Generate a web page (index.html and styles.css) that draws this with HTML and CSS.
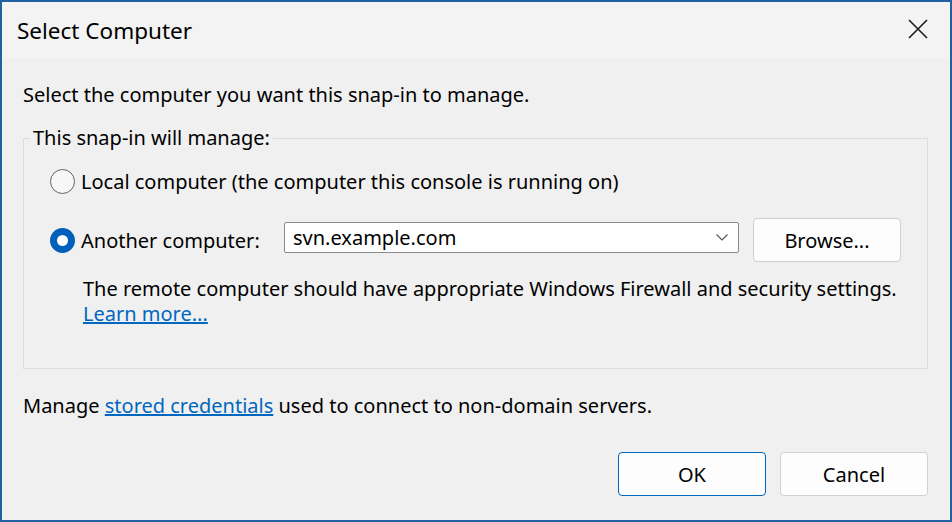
FILE: index.html
```html
<!DOCTYPE html>
<html lang="en">
<head>
    <meta charset="UTF-8">
    <title>Select Computer</title>
    <link rel="stylesheet" href="styles.css">
</head>
<body>
    <div class="window">
        <div class="titlebar">
            <span class="title">Select Computer</span>
            <button class="close" aria-label="Close">
                <svg width="20" height="20" viewBox="0 0 20 20">
                    <path d="M1 1 L19 19 M19 1 L1 19" stroke="#1a1a1a" stroke-width="1.6" fill="none"/>
                </svg>
            </button>
        </div>

        <div class="content">
            <p class="intro">Select the computer you want this snap-in to manage.</p>

            <fieldset class="group">
                <legend>This snap-in will manage:</legend>

                <div class="group-body">
                    <label class="row row-local">
                        <span class="radio"></span>
                        <span>Local computer (the computer this console is running on)</span>
                    </label>

                    <div class="row row-remote">
                        <label class="radio-label">
                            <span class="radio checked"></span>
                            <span>Another computer:</span>
                        </label>
                        <div class="combo">
                            <span>svn.example.com</span>
                            <svg width="12" height="7" viewBox="0 0 12 7">
                                <path d="M0.5 0.5 L6 6 L11.5 0.5" stroke="#555" stroke-width="1.1" fill="none"/>
                            </svg>
                        </div>
                        <button class="btn browse">Browse...</button>
                    </div>

                    <p class="note">
                        The remote computer should have appropriate Windows Firewall and security settings.<br>
                        <a href="#">Learn more...</a>
                    </p>
                </div>
            </fieldset>

            <p class="creds">Manage <a href="#">stored credentials</a> used to connect to non-domain servers.</p>

            <div class="actions">
                <button class="btn default">OK</button>
                <button class="btn">Cancel</button>
            </div>
        </div>
    </div>
</body>
</html>
```

FILE: styles.css
```css
body {
    margin: 0;
    font-family: "Noto Sans", "Open Sans", sans-serif;
    font-size: 20px;
    color: #000;
}

.window {
    width: 952px;
    height: 522px;
    box-sizing: border-box;
    border: 2px solid #2161a3;
    background-color: #f0f0f0;
}

.titlebar {
    height: 56px;
    display: flex;
    align-items: center;
    justify-content: space-between;
    padding: 0 22px 0 15px;
    background-color: #f3f3f3;
}

.title { font-size: 22.5px; }

.close {
    border: none;
    background: none;
    padding: 0;
    width: 20px;
    height: 20px;
    margin-bottom: 2px;
}

.content { padding: 0 22px 0 21px; }

p { margin: 0; line-height: 24px; }

.intro { padding-top: 25px; margin-bottom: 19px; }

.group {
    margin: 0;
    border: 1px solid #dcdcdc;
    padding: 16px 20px 42px 6px;
}

.group legend {
    padding: 0 3px;
    line-height: 24px;
}

.group-body { padding-left: 20px; }

.row { display: flex; align-items: center; }

.row-local { height: 30px; gap: 6px; }

.row-remote { height: 44px; margin-top: 22px; }

.radio-label {
    display: flex;
    align-items: center;
    gap: 6px;
    width: 234px;
}

.radio {
    width: 25px;
    height: 25px;
    box-sizing: border-box;
    border: 1.5px solid #646464;
    border-radius: 50%;
    background-color: #f7f7f7;
    flex-shrink: 0;
}

.radio.checked {
    border: 7px solid #005fb8;
    background-color: #fff;
}

.combo {
    width: 455px;
    height: 31px;
    box-sizing: border-box;
    border: 1px solid #8a8a8a;
    border-radius: 2px;
    background-color: #fff;
    display: flex;
    align-items: center;
    justify-content: space-between;
    padding: 0 10px 0 8px;
    margin-top: -5px;
}

.btn {
    font-family: inherit;
    font-size: 20px;
    color: #000;
    width: 148px;
    height: 44px;
    box-sizing: border-box;
    border: 1px solid #d0d0d0;
    border-radius: 4px;
    background-color: #fdfdfd;
    padding: 0;
}

.browse { margin-left: 14px; }

.btn.default { border-color: #0067c0; }

.note {
    margin-top: 14px;
    padding-left: 33px;
    line-height: 25px;
}

a { color: #0067c0; }

.creds { margin-top: 25px; }

.actions {
    display: flex;
    justify-content: flex-end;
    gap: 14px;
    margin-top: 34px;
}
```
